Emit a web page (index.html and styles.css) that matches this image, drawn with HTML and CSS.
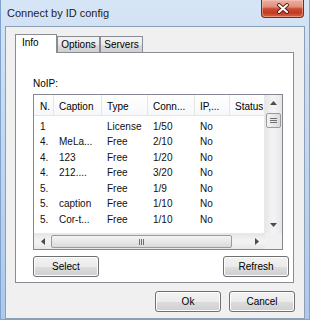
FILE: index.html
```html
<!DOCTYPE html>
<html lang="en">
  <head>
    <meta charset="UTF-8" />
    <title>Connect by ID config</title>
    <link rel="stylesheet" href="styles.css">
  </head>
  <body>
    <div class="window">
      <div class="titlebar">
        <span class="title">Connect by ID config</span>
        <div class="close-btn">
          <svg width="14" height="11" viewBox="0 0 14 11">
            <path d="M3 2 L11 9 M11 2 L3 9" stroke="#5a1c10" stroke-width="3.8" stroke-linecap="round" fill="none"></path>
            <path d="M3 2 L11 9 M11 2 L3 9" stroke="#ffffff" stroke-width="2" stroke-linecap="round" fill="none"></path>
          </svg>
        </div>
      </div>

      <div class="client">
        <div class="tabs">
          <div class="tab active">Info</div>
          <div class="tab">Options</div>
          <div class="tab">Servers</div>
          <div class="tab-fill"></div>
        </div>

        <div class="panel">
          <div class="label">NoIP:</div>

          <div class="listview">
            <div class="lv-main">
              <div class="lv-content">
                <div class="lv-row lv-header">
                  <div class="cell">N.</div>
                  <div class="cell">Caption</div>
                  <div class="cell">Type</div>
                  <div class="cell">Conn...</div>
                  <div class="cell">IP,...</div>
                  <div class="cell">Status</div>
                </div>
                <div class="lv-body">
                  <div class="lv-row"><div class="cell">1</div><div class="cell"></div><div class="cell">License</div><div class="cell">1/50</div><div class="cell">No</div><div class="cell"></div></div>
                  <div class="lv-row"><div class="cell">4.</div><div class="cell">MeLa...</div><div class="cell">Free</div><div class="cell">2/10</div><div class="cell">No</div><div class="cell"></div></div>
                  <div class="lv-row"><div class="cell">4.</div><div class="cell">123</div><div class="cell">Free</div><div class="cell">1/20</div><div class="cell">No</div><div class="cell"></div></div>
                  <div class="lv-row"><div class="cell">4.</div><div class="cell">212....</div><div class="cell">Free</div><div class="cell">3/20</div><div class="cell">No</div><div class="cell"></div></div>
                  <div class="lv-row"><div class="cell">5.</div><div class="cell"></div><div class="cell">Free</div><div class="cell">1/9</div><div class="cell">No</div><div class="cell"></div></div>
                  <div class="lv-row"><div class="cell">5.</div><div class="cell">caption</div><div class="cell">Free</div><div class="cell">1/10</div><div class="cell">No</div><div class="cell"></div></div>
                  <div class="lv-row"><div class="cell">5.</div><div class="cell">Cor-t...</div><div class="cell">Free</div><div class="cell">1/10</div><div class="cell">No</div><div class="cell"></div></div>
                </div>
              </div>

              <div class="vscroll">
                <div class="sb-arrow">
                  <svg width="7" height="4" viewBox="0 0 7 4"><polygon points="3.5,0 7,4 0,4" fill="#4c4c4c"></polygon></svg>
                </div>
                <div class="v-thumb"><span></span><span></span><span></span></div>
                <div class="sb-track"></div>
                <div class="sb-arrow">
                  <svg width="7" height="4" viewBox="0 0 7 4"><polygon points="0,0 7,0 3.5,4" fill="#4c4c4c"></polygon></svg>
                </div>
              </div>
            </div>

            <div class="lv-bottom">
              <div class="hscroll">
                <div class="sb-arrow">
                  <svg width="4" height="7" viewBox="0 0 4 7"><polygon points="0,3.5 4,0 4,7" fill="#4c4c4c"></polygon></svg>
                </div>
                <div class="h-thumb"><span></span><span></span><span></span></div>
                <div class="sb-track"></div>
                <div class="sb-arrow">
                  <svg width="4" height="7" viewBox="0 0 4 7"><polygon points="0,0 4,3.5 0,7" fill="#4c4c4c"></polygon></svg>
                </div>
              </div>
              <div class="sb-corner"></div>
            </div>
          </div>

          <div class="panel-buttons">
            <button class="btn">Select</button>
            <button class="btn">Refresh</button>
          </div>
        </div>

        <div class="dialog-buttons">
          <button class="btn">Ok</button>
          <button class="btn">Cancel</button>
        </div>
      </div>
    </div>
  </body>
</html>
```

FILE: styles.css
```css
body {
  margin: 0;
  padding: 0;
  font-family: "Liberation Sans", Arial, sans-serif;
  font-size: 10px;
  color: #000;
  background: #fff;
}
.window {
  width: 310px;
  height: 320px;
  box-sizing: border-box;
  padding: 0 5px 1px;
  background: linear-gradient(180deg, #d6e5f6 0%, #c8dbf2 30%, #b9d0ed 70%, #adc8ea 100%);
  box-shadow: inset 1px 0 0 #7fa3cf, inset -1px 0 0 #7fa3cf, inset 0 -1px 0 #7fa3cf;
  display: flex;
  flex-direction: column;
  overflow: hidden;
}
.titlebar {
  height: 26px;
  display: flex;
  align-items: flex-start;
  justify-content: space-between;
}
.title {
  font-size: 11px;
  line-height: 13px;
  padding: 7px 0 0 2px;
  color: #1e1e1e;
}
.close-btn {
  width: 43px;
  height: 18px;
  box-sizing: border-box;
  margin-right: 1px;
  border: 1px solid #7a2a1c;
  border-top: none;
  border-radius: 0 0 4px 4px;
  background: linear-gradient(180deg, #eab0a2 0%, #e0907c 40%, #cc4a30 52%, #c23b22 75%, #d8643f 100%);
  box-shadow: inset 0 0 0 1px rgba(255, 210, 200, 0.45);
  display: flex;
  align-items: center;
  justify-content: center;
}
.client {
  flex: 1;
  background: #f0f0f0;
  border: 1px solid #8d9fb5;
  display: flex;
  flex-direction: column;
}

/* tabs */
.tabs {
  display: flex;
  align-items: flex-end;
  width: 279px;
  height: 19px;
  margin: 7px 0 0 9px;
}
.tab {
  box-sizing: border-box;
  width: 43px;
  height: 17px;
  border: 1px solid #898c95;
  padding-top: 2px;
  line-height: 12px;
  text-align: center;
  background: linear-gradient(180deg, #f2f2f2 0%, #ebebeb 50%, #dddddd 51%, #cfcfcf 100%);
}
.tab.active {
  width: 42px;
  height: 19px;
  text-align: left;
  padding-left: 6px;
  background: #fff;
  border-bottom: none;
}
.tab-fill {
  flex: 1;
  border-bottom: 1px solid #898c95;
}

/* tab page */
.panel {
  width: 279px;
  box-sizing: border-box;
  margin-left: 9px;
  background: #fff;
  border: 1px solid #898c95;
  border-top: none;
  padding-bottom: 5px;
}
.label {
  margin: 25px 0 0 17px;
  line-height: 12px;
}

/* list view */
.listview {
  width: 250px;
  height: 156px;
  box-sizing: border-box;
  margin: 4px 0 0 17px;
  border: 1px solid #828790;
  display: flex;
  flex-direction: column;
}
.lv-main {
  flex: 1;
  display: flex;
  min-height: 0;
}
.lv-content {
  flex: 1;
  overflow: hidden;
}
.lv-row {
  display: grid;
  grid-template-columns: 20px 48px 46px 47px 35px 36px;
  height: 15.5px;
  line-height: 15.5px;
  white-space: nowrap;
}
.cell {
  padding-left: 5px;
  overflow: hidden;
}
.lv-row .cell:first-child {
  padding-left: 6px;
}
.lv-header {
  height: 21px;
  box-sizing: border-box;
  line-height: 12px;
  padding-top: 6px;
  border-bottom: 1px solid #e5e5e5;
  background: linear-gradient(180deg, #ffffff 0%, #f7f8fa 100%);
}
.lv-header .cell {
  border-right: 1px solid #e5e5e5;
  margin-top: -6px;
  padding-top: 6px;
  height: 21px;
  box-sizing: border-box;
}
.lv-body {
  padding-top: 2.5px;
  color: #101010;
}

/* scroll bars */
.vscroll {
  width: 17px;
  display: flex;
  flex-direction: column;
  background: linear-gradient(90deg, #e6e6e6 0%, #f2f2f2 40%, #f2f2f2 60%, #e6e6e6 100%);
  border-left: 1px solid #e8e8e8;
}
.vscroll .sb-arrow {
  height: 16px;
  display: flex;
  align-items: center;
  justify-content: center;
}
.sb-track {
  flex: 1;
}
.v-thumb {
  height: 15px;
  margin: 2px 1px 0;
  box-sizing: border-box;
  border: 1px solid #9b9b9b;
  border-radius: 2px;
  background: linear-gradient(90deg, #f3f3f3 0%, #e8e8e8 50%, #dadada 100%);
  display: flex;
  flex-direction: column;
  align-items: center;
  justify-content: center;
  gap: 1px;
}
.v-thumb span {
  width: 7px;
  height: 1px;
  background: #6f6f6f;
}
.lv-bottom {
  height: 16px;
  display: flex;
}
.hscroll {
  flex: 1;
  display: flex;
  background: linear-gradient(180deg, #e6e6e6 0%, #f2f2f2 40%, #f2f2f2 60%, #e6e6e6 100%);
  border-top: 1px solid #e8e8e8;
}
.hscroll .sb-arrow {
  width: 17px;
  display: flex;
  align-items: center;
  justify-content: center;
}
.h-thumb {
  width: 181px;
  margin: 1px 0;
  box-sizing: border-box;
  border: 1px solid #9b9b9b;
  border-radius: 2px;
  background: linear-gradient(180deg, #f3f3f3 0%, #e8e8e8 50%, #dadada 100%);
  display: flex;
  align-items: center;
  justify-content: center;
  gap: 1px;
}
.h-thumb span {
  width: 1px;
  height: 6px;
  background: #6f6f6f;
}
.sb-corner {
  width: 17px;
  background: #f0f0f0;
}

/* buttons */
.btn {
  font-family: inherit;
  font-size: 10px;
  color: #000;
  width: 66px;
  height: 21px;
  padding: 0;
  border: 1px solid #707070;
  border-radius: 3px;
  background: linear-gradient(180deg, #f2f2f2 0%, #ebebeb 50%, #dddddd 51%, #cfcfcf 100%);
  box-shadow: inset 0 0 0 1px #fcfcfc;
}
.panel-buttons {
  display: flex;
  justify-content: space-between;
  margin: 6px 4px 0 17px;
}
.dialog-buttons {
  display: flex;
  justify-content: flex-end;
  gap: 8px;
  margin: 8px 9px 0 0;
}
```
